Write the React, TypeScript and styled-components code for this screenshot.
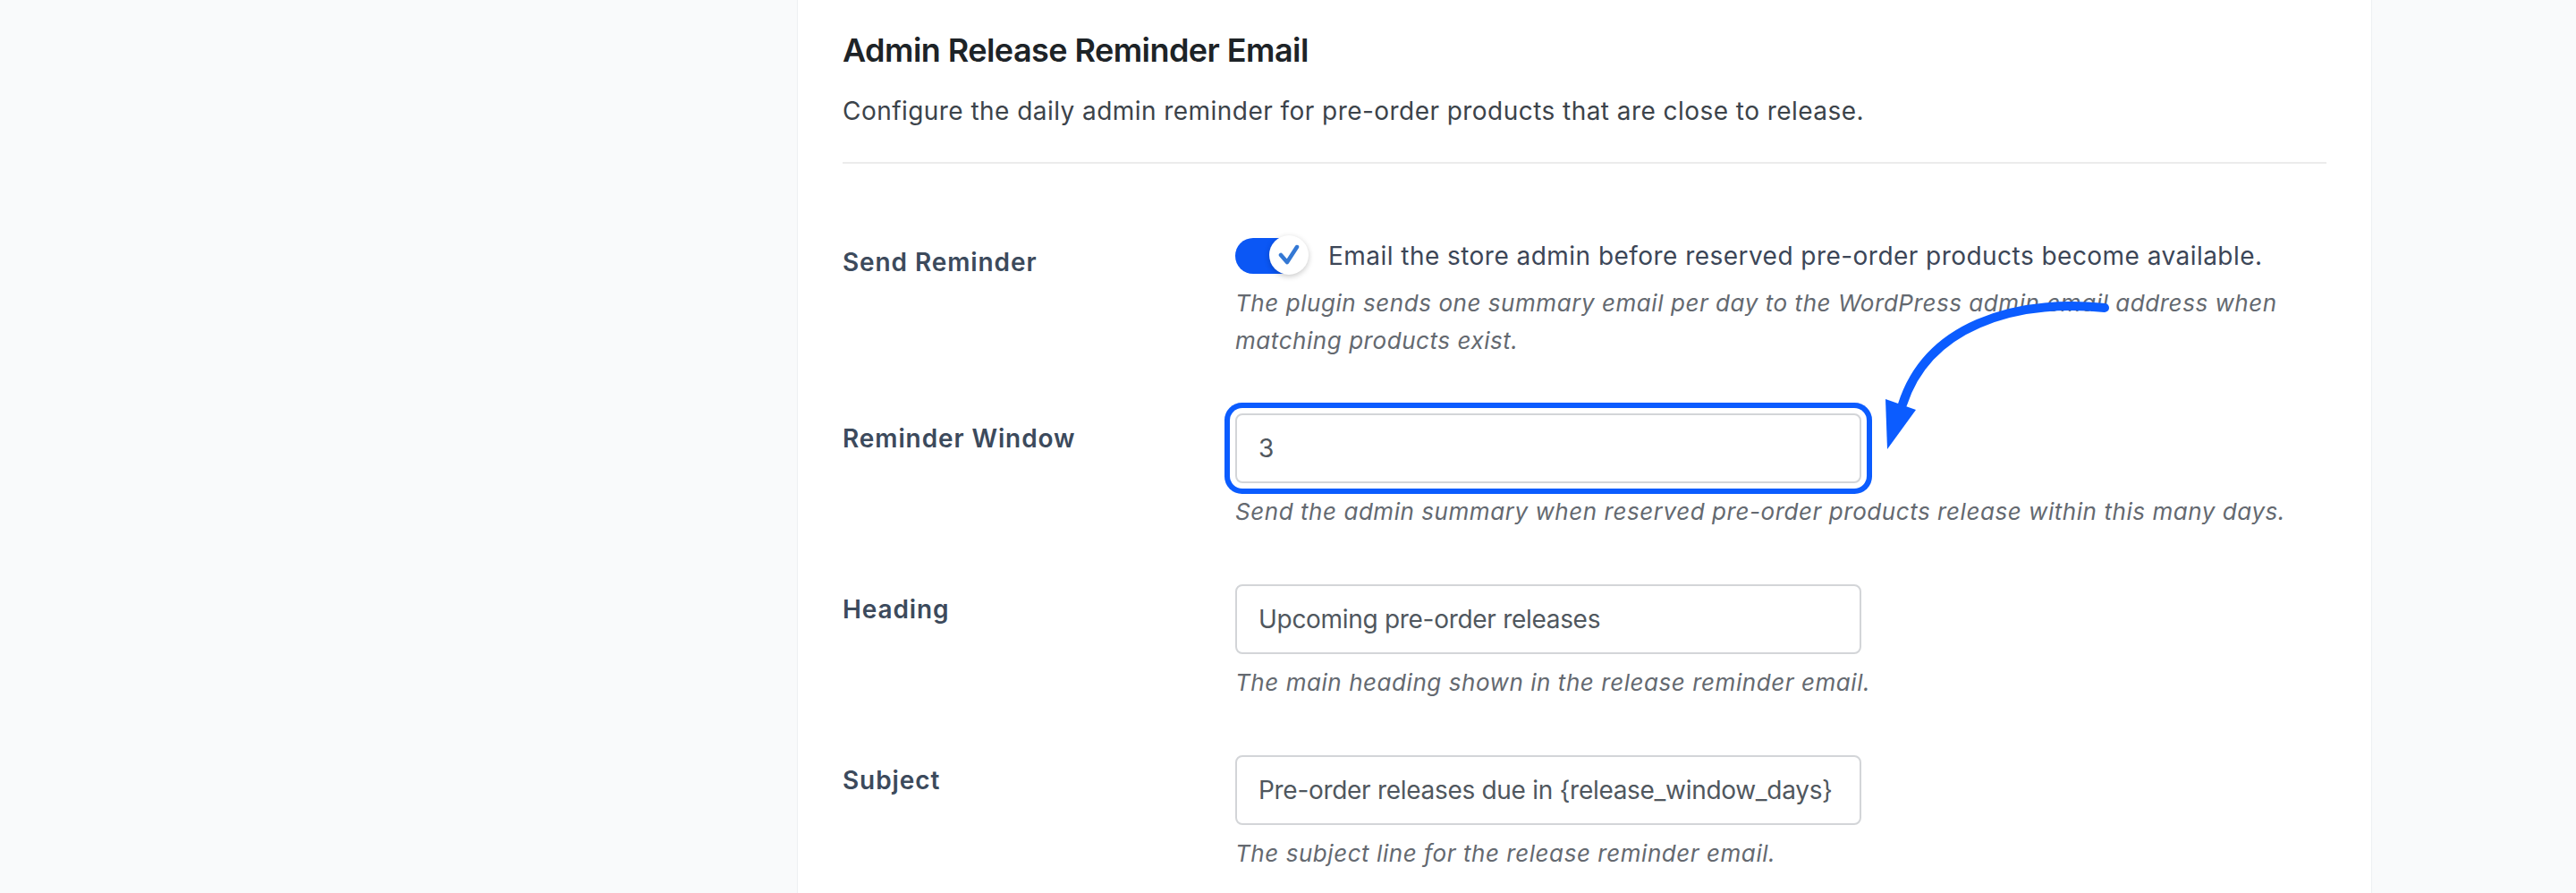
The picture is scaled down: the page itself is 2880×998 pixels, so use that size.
import React from 'react';
import styled, { createGlobalStyle } from 'styled-components';

const GlobalStyle = createGlobalStyle`
  * { box-sizing: border-box; }
  html, body {
    margin: 0;
    padding: 0;
    background: #f9fafb;
  }
  body {
    font-family: Inter, "Noto Sans", "Liberation Sans", sans-serif;
    overflow: hidden;
  }
`;

const Page = styled.div`
  position: relative;
  display: grid;
  grid-template-columns: 891px 1761px 1fr;
  min-height: 998px;
  background: #f9fafb;
`;

const Card = styled.section`
  background: #fff;
  border-left: 1px solid #eef0f2;
  border-right: 1px solid #eef0f2;
  padding: 31px 50px 0;
  min-height: 998px;
`;

const Title = styled.h2`
  margin: 0;
  font-size: 36px;
  font-weight: 600;
  line-height: 50px;
  letter-spacing: -0.55px;
  color: #1d2327;
`;

const Intro = styled.p`
  margin: 22px 0 0;
  font-size: 28px;
  line-height: 42px;
  letter-spacing: 0.45px;
  color: #3c434a;
`;

const Divider = styled.hr`
  margin: 36px 0 0;
  border: 0;
  height: 2px;
  background: #ececec;
`;

const Form = styled.div`
  margin-top: 52px;
`;

const Row = styled.div`
  display: grid;
  grid-template-columns: 439px 1fr;
`;

const Label = styled.div`
  padding-top: 40px;
  font-size: 28px;
  font-weight: 600;
  line-height: 1.3;
  letter-spacing: 0.9px;
  color: #3c4a5c;
`;

const Field = styled.div`
  padding: 30px 0;
`;

const ToggleLine = styled.label`
  display: flex;
  align-items: center;
  gap: 24px;
  min-height: 42px;
  font-size: 28px;
  line-height: 42px;
  letter-spacing: 0.46px;
  color: #3c4657;
`;

const Track = styled.span<{ $on: boolean }>`
  position: relative;
  flex-shrink: 0;
  width: 80px;
  height: 40px;
  border-radius: 20px;
  background: ${(p) => (p.$on ? '#0b57f5' : '#c3c4c7')};
`;

const Knob = styled.span`
  position: absolute;
  right: -2px;
  top: -3px;
  width: 44px;
  height: 44px;
  border-radius: 50%;
  background: #fff;
  box-shadow: 0 2px 6px rgba(0, 0, 0, 0.22);
  display: flex;
  align-items: center;
  justify-content: center;
`;

const Help = styled.p`
  margin: 11px 0 0;
  font-size: 26px;
  font-style: italic;
  line-height: 42px;
  letter-spacing: 0.55px;
  color: #646970;
`;

const TextInput = styled.input<{ $highlight?: boolean }>`
  display: block;
  width: 700px;
  height: 78px;
  padding: 0 22px 0 24px;
  border: 2px solid #d3d5d8;
  border-radius: 8px;
  background: #fff;
  font-family: inherit;
  font-size: 28px;
  letter-spacing: -0.3px;
  color: #50575e;
  outline: none;
  box-shadow: ${(p) => (p.$highlight ? '0 0 0 6px #fff, 0 0 0 12px #0b5cff' : 'none')};
`;

const Overlay = styled.svg`
  position: absolute;
  left: 0;
  top: 0;
  width: 2880px;
  height: 998px;
  pointer-events: none;
`;

const Toggle: React.FC<{ on: boolean }> = ({ on }) => (
  <Track $on={on}>
    <Knob>
      <svg width="24" height="24" viewBox="0 0 24 24">
        <path d="M3 12 L10 20 L21 3" fill="none" stroke="#3478d4" strokeWidth="4.5" strokeLinecap="round" strokeLinejoin="round" />
      </svg>
    </Knob>
  </Track>
);

export default function App() {
  return (
    <>
      <GlobalStyle />
      <Page>
        <div />
        <Card>
          <Title>Admin Release Reminder Email</Title>
          <Intro>Configure the daily admin reminder for pre-order products that are close to release.</Intro>
          <Divider />
          <Form>
            <Row>
              <Label>Send Reminder</Label>
              <Field>
                <ToggleLine>
                  <Toggle on />
                  Email the store admin before reserved pre-order products become available.
                </ToggleLine>
                <Help>
                  The plugin sends one summary email per day to the WordPress admin email address when
                  <br />
                  matching products exist.
                </Help>
              </Field>
            </Row>
            <Row>
              <Label>Reminder Window</Label>
              <Field>
                <TextInput $highlight defaultValue="3" />
                <Help>Send the admin summary when reserved pre-order products release within this many days.</Help>
              </Field>
            </Row>
            <Row>
              <Label>Heading</Label>
              <Field>
                <TextInput defaultValue="Upcoming pre-order releases" />
                <Help>The main heading shown in the release reminder email.</Help>
              </Field>
            </Row>
            <Row>
              <Label>Subject</Label>
              <Field>
                <TextInput defaultValue="Pre-order releases due in {release_window_days} days" />
                <Help>The subject line for the release reminder email.</Help>
              </Field>
            </Row>
          </Form>
        </Card>
        <div />
        <Overlay viewBox="0 0 2880 998">
          <path d="M2353 344 C2250 334 2155 365 2127 452" fill="none" stroke="#0b5cff" strokeWidth="10" strokeLinecap="round" />
          <polygon points="2108,446 2142,458 2110,502" fill="#0b5cff" />
        </Overlay>
      </Page>
    </>
  );
}
